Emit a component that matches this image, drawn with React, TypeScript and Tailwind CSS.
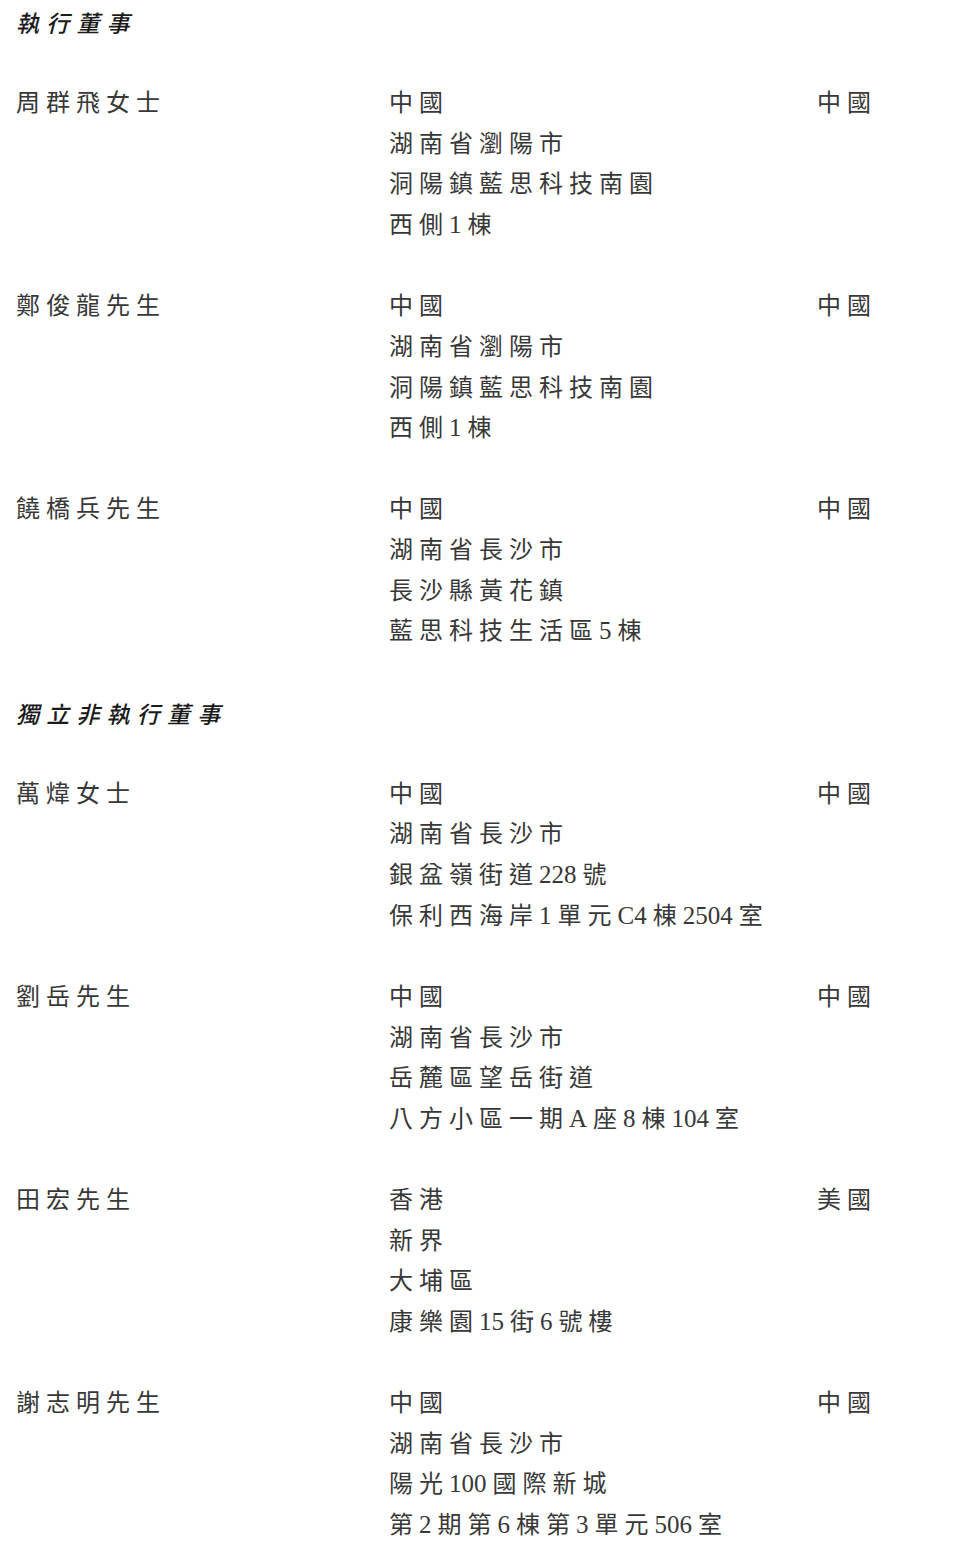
import React from "react";

const LH = "leading-[40.62px]";

function Rich({ text }: { text: string }) {
  const parts = text.split(/([0-9A-Za-z]+)/).filter((p) => p.length > 0);
  return (
    <>
      {parts.map((p, i) =>
        /^[0-9A-Za-z]+$/.test(p) ? (
          <span
            key={i}
            className="tracking-[0px] mr-[6px] text-[25px]"
            style={{ fontFamily: '"Liberation Serif", serif' }}
          >
            {p}
          </span>
        ) : (
          <span key={i}>{p}</span>
        )
      )}
    </>
  );
}

type Row = { name: string; addr: string[]; country: string };

const exec: Row[] = [
  { name: "周群飛女士", addr: ["中國", "湖南省瀏陽市", "洞陽鎮藍思科技南園", "西側1棟"], country: "中國" },
  { name: "鄭俊龍先生", addr: ["中國", "湖南省瀏陽市", "洞陽鎮藍思科技南園", "西側1棟"], country: "中國" },
  { name: "饒橋兵先生", addr: ["中國", "湖南省長沙市", "長沙縣黃花鎮", "藍思科技生活區5棟"], country: "中國" },
];

const indep: Row[] = [
  { name: "萬煒女士", addr: ["中國", "湖南省長沙市", "銀盆嶺街道228號", "保利西海岸1單元C4棟2504室"], country: "中國" },
  { name: "劉岳先生", addr: ["中國", "湖南省長沙市", "岳麓區望岳街道", "八方小區一期A座8棟104室"], country: "中國" },
  { name: "田宏先生", addr: ["香港", "新界", "大埔區", "康樂園15街6號樓"], country: "美國" },
  { name: "謝志明先生", addr: ["中國", "湖南省長沙市", "陽光100國際新城", "第2期第6棟第3單元506室"], country: "中國" },
];

function Heading({ children }: { children: string }) {
  return (
    <div
      className={`${LH} text-[23px] italic font-medium tracking-[7.2px] text-[#1a1a1a] mb-[40.62px]`}
      style={{ fontFamily: '"Noto Sans CJK TC", sans-serif' }}
    >
      {children}
    </div>
  );
}

function Block({ row }: { row: Row }) {
  return (
    <div className="grid grid-cols-[373px_428px_1fr] mb-[40.62px]">
      <div>{row.name}</div>
      <div className="flex flex-col">
        {row.addr.map((a, i) => (
          <div key={i} className="whitespace-nowrap">
            <Rich text={a} />
          </div>
        ))}
      </div>
      <div>{row.country}</div>
    </div>
  );
}

export default function App() {
  return (
    <div
      className={`w-[954px] h-[1548px] bg-white pl-[16px] pt-[2px] text-[24px] ${LH} tracking-[6px] text-[#383838] overflow-hidden`}
      style={{ fontFamily: '"Liberation Serif", "Noto Sans CJK TC", serif' }}
    >
      <Heading>執行董事</Heading>
      {exec.map((r, i) => (
        <Block key={i} row={r} />
      ))}
      <Heading>獨立非執行董事</Heading>
      {indep.map((r, i) => (
        <Block key={i} row={r} />
      ))}
    </div>
  );
}
